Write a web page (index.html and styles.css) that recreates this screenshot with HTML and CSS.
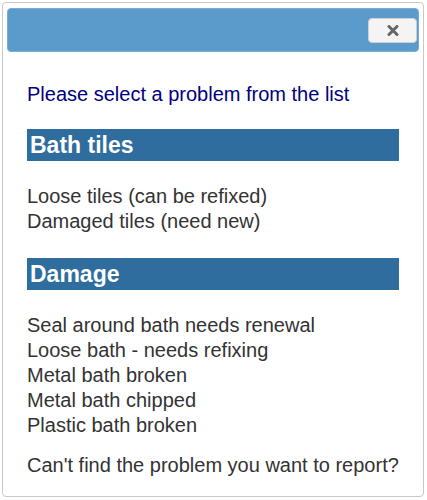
FILE: index.html
```html
<!DOCTYPE html>
<html lang="en">
<head>
    <meta charset="UTF-8">
    <meta name="viewport" content="width=device-width, initial-scale=1.0">
    <title>Report a problem</title>
    <link rel="stylesheet" href="styles.css">
</head>
<body>

    <div class="dialog">
        <div class="dialog-header">
            <button class="close-btn" aria-label="Close">
                <svg width="12" height="11" viewBox="0 0 12 11">
                    <path d="M2 1.5 L10 9.5 M10 1.5 L2 9.5" stroke="#666" stroke-width="3" stroke-linecap="round"/>
                </svg>
            </button>
        </div>

        <div class="dialog-body">
            <p class="intro">Please select a problem from the list</p>

            <h3 class="group-title">Bath tiles</h3>
            <ul class="problems">
                <li>Loose tiles (can be refixed)</li>
                <li>Damaged tiles (need new)</li>
            </ul>

            <h3 class="group-title">Damage</h3>
            <ul class="problems">
                <li>Seal around bath needs renewal</li>
                <li>Loose bath - needs refixing</li>
                <li>Metal bath broken</li>
                <li>Metal bath chipped</li>
                <li>Plastic bath broken</li>
            </ul>

            <p class="not-found">Can't find the problem you want to report?</p>
        </div>
    </div>

</body>
</html>
```

FILE: styles.css
```css
* { margin: 0; padding: 0; box-sizing: border-box; font-family: 'Liberation Sans', Arial, sans-serif; }
body { background: #fff; color: #333; }
.dialog { margin: 2px; width: 422px; height: 495px; border: 1px solid #c8c8c8; border-radius: 4px; background: #fff; }
.dialog-header { margin: 5px 4px 0 4px; height: 44px; background: #5b9bcb; border: 1px solid #78acd6; border-radius: 4px; display: flex; justify-content: flex-end; align-items: flex-start; padding: 9px 1px 0 0; }
.close-btn { width: 49px; height: 25px; background: #f4f4f4; border: 1px solid #d0d0d0; border-radius: 4px; display: flex; justify-content: center; align-items: center; cursor: pointer; }
.dialog-body { padding: 30px 24px 0 24px; font-size: 20px; line-height: 25px; }
.intro { color: #000080; }
.group-title { margin-top: 22px; width: 372px; height: 32px; line-height: 32px; background: #2e6d9e; color: #fff; font-size: 23px; font-weight: bold; padding-left: 3px; }
.problems { list-style: none; margin: 23px 0 24px 0; }
.problems:last-of-type { margin-bottom: 15px; }
```
